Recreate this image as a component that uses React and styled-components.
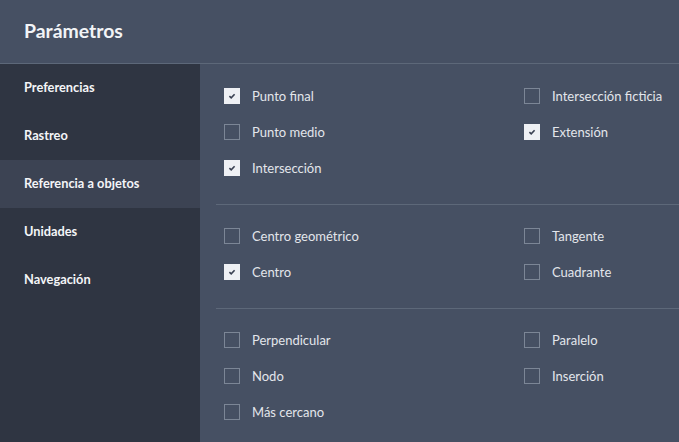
import React, { useState } from "react";
import styled, { createGlobalStyle } from "styled-components";

const GlobalStyle = createGlobalStyle`
  html, body {
    margin: 0;
    padding: 0;
    background: #465063;
  }
  body {
    font-family: Lato, "Liberation Sans", sans-serif;
  }
`

const Wrapper = styled.div`
  width: 679px;
  height: 442px;
  display: flex;
  flex-direction: column;
  background: #465063;
  overflow: hidden;
`

const Header = styled.div`
  height: 63px;
  flex-shrink: 0;
  display: flex;
  align-items: center;
  padding: 0 24px;
  border-bottom: 1px solid #5d6879;

  & > .title {
    font-size: 19.4px;
    font-weight: 700;
    color: #f2f4f7;
    margin-top: -2px;
  }
`

const Body = styled.div`
  flex-grow: 1;
  display: flex;
  min-height: 0;
`

const Sidebar = styled.div`
  width: 200px;
  flex-shrink: 0;
  background: #2f3542;
  display: flex;
  flex-direction: column;
`

const NavItem = styled.div`
  height: 48px;
  box-sizing: border-box;
  display: flex;
  align-items: center;
  padding: 0 24px 2px;
  font-size: 12.8px;
  font-weight: 700;
  color: #f4f5f8;
  background: ${p => p.active ? '#3c4353' : 'transparent'};
  cursor: pointer;
`

const Content = styled.div`
  flex-grow: 1;
  padding: 1px 0 0 16px;
`

const Section = styled.div`
  display: grid;
  grid-template-columns: 300px 1fr;
  grid-auto-rows: 36px;
  padding: 13px 0 18px 8px;
  border-bottom: 1px solid ${p => p.last ? 'transparent' : '#5d6879'};
`

const Option = styled.label`
  display: flex;
  align-items: center;
  gap: 12px;
  font-size: 13px;
  color: #e3e6eb;
  cursor: pointer;
  grid-column: ${p => p.col};
`

const Box = styled.span`
  width: 16px;
  height: 16px;
  box-sizing: border-box;
  flex-shrink: 0;
  display: flex;
  align-items: center;
  justify-content: center;
  background: ${p => p.checked ? '#eef0f4' : 'transparent'};
  border: 1px solid ${p => p.checked ? '#eef0f4' : '#7c8696'};
`

const navItems = ['Preferencias', 'Rastreo', 'Referencia a objetos', 'Unidades', 'Navegación']

const sections = [
  [
    { label: 'Punto final', col: 1, checked: true },
    { label: 'Intersección ficticia', col: 2, checked: false },
    { label: 'Punto medio', col: 1, checked: false },
    { label: 'Extensión', col: 2, checked: true },
    { label: 'Intersección', col: 1, checked: true },
  ],
  [
    { label: 'Centro geométrico', col: 1, checked: false },
    { label: 'Tangente', col: 2, checked: false },
    { label: 'Centro', col: 1, checked: true },
    { label: 'Cuadrante', col: 2, checked: false },
  ],
  [
    { label: 'Perpendicular', col: 1, checked: false },
    { label: 'Paralelo', col: 2, checked: false },
    { label: 'Nodo', col: 1, checked: false },
    { label: 'Inserción', col: 2, checked: false },
    { label: 'Más cercano', col: 1, checked: false },
  ],
]

function Check({ checked }) {
  return (
    <Box checked={checked}>
      { checked &&
        <svg width="10" height="10" viewBox="0 0 10 10">
          <path d="M2.4 5.2 L4.2 6.9 L7.6 3.2" fill="none" stroke="#3a4152" strokeWidth="1.6" />
        </svg>
      }
    </Box>
  )
}

export default function App() {
  const [active, setActive] = useState(2)
  const [state, setState] = useState(sections)

  const toggle = (s, i) => {
    setState(state.map((sec, si) => si !== s ? sec : sec.map((o, oi) => oi !== i ? o : { ...o, checked: !o.checked })))
  }

  return (
    <>
      <GlobalStyle />
      <Wrapper>
        <Header>
          <div className="title">Parámetros</div>
        </Header>
        <Body>
          <Sidebar>
            { navItems.map((item, index) => (
              <NavItem key={item} active={index === active} onClick={() => setActive(index)}>{item}</NavItem>
            )) }
          </Sidebar>
          <Content>
            { state.map((sec, s) => (
              <Section key={s} last={s === state.length - 1}>
                { sec.map((o, i) => (
                  <Option key={o.label} col={o.col} onClick={() => toggle(s, i)}>
                    <Check checked={o.checked} />
                    {o.label}
                  </Option>
                )) }
              </Section>
            )) }
          </Content>
        </Body>
      </Wrapper>
    </>
  )
}
